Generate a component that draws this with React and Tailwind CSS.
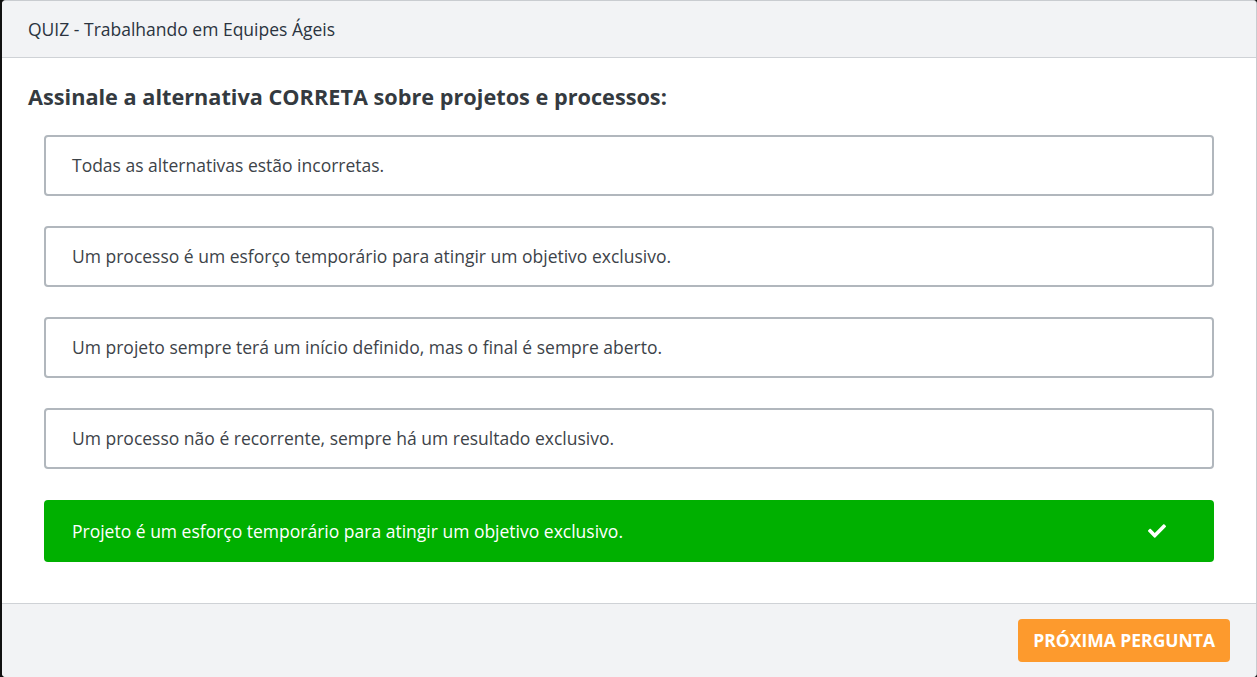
import { FaCheck } from "react-icons/fa";

const options = [
  { id: 1, text: "Todas as alternativas estão incorretas." },
  { id: 2, text: "Um processo é um esforço temporário para atingir um objetivo exclusivo." },
  { id: 3, text: "Um projeto sempre terá um início definido, mas o final é sempre aberto." },
  { id: 4, text: "Um processo não é recorrente, sempre há um resultado exclusivo." },
  { id: 5, text: "Projeto é um esforço temporário para atingir um objetivo exclusivo.", correct: true },
];

export default function App() {
  return (
    <div
      className="w-full h-[677px] bg-[#111] overflow-hidden"
      style={{ fontFamily: '"Open Sans", "Noto Sans", sans-serif' }}
    >
      <div className="h-full ml-[2px] bg-white rounded-[4px] border-t border-r border-[#c9ccd0] flex flex-col overflow-hidden">
        {/* Header */}
        <div className="h-[57px] shrink-0 bg-[#f2f3f5] border-b border-[#cfd2d6] flex items-center px-[26px]">
          <span className="text-[17.5px] text-[#2b3440]">QUIZ - Trabalhando em Equipes Ágeis</span>
        </div>

        {/* Body */}
        <div className="flex-1 px-[26px] pt-[24px]">
          <h2 className="text-[21.7px] leading-[30px] font-bold text-[#343a40]">
            Assinale a alternativa CORRETA sobre projetos e processos:
          </h2>
          <div className="mt-[23px] mx-[16px] flex flex-col gap-[30px]">
            {options.map((opt) =>
              opt.correct ? (
                <div
                  key={opt.id}
                  className="mt-[1px] h-[62px] rounded-[4px] bg-[#00b000] flex items-center justify-between pl-[28px] pr-[48px]"
                >
                  <span className="text-[17.5px] font-medium text-white">{opt.text}</span>
                  <FaCheck className="text-white w-[18px] h-[18px]" />
                </div>
              ) : (
                <div
                  key={opt.id}
                  className="h-[61px] rounded-[4px] border-2 border-[#b1b7bd] flex items-center pl-[26px]"
                >
                  <span className="text-[17.5px] text-[#3d4349]">{opt.text}</span>
                </div>
              )
            )}
          </div>
        </div>

        {/* Footer */}
        <div className="h-[74px] shrink-0 bg-[#f2f3f5] border-t border-[#cfd2d6] flex items-center justify-end pr-[26px]">
          <button className="h-[43px] px-[15px] rounded-[4px] bg-[#fd9a2d] text-white text-[17.5px] font-bold uppercase">
            Próxima Pergunta
          </button>
        </div>
      </div>
    </div>
  );
}
